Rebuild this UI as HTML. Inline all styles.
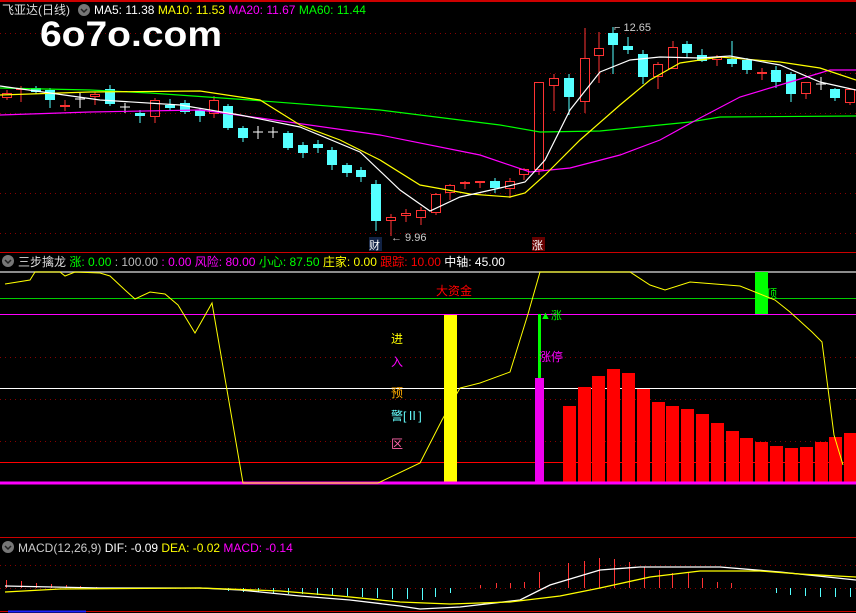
<!DOCTYPE html>
<html><head><meta charset="utf-8"><style>
html,body{margin:0;padding:0;background:#000;width:856px;height:613px;overflow:hidden}
svg{display:block}
text{font-family:"Liberation Sans","Noto Sans CJK SC",sans-serif}
</style></head><body>
<svg id="s" width="856" height="613" viewBox="0 0 856 613" xmlns="http://www.w3.org/2000/svg">
<rect width="856" height="613" fill="#000"/>
<line x1="0" y1="1" x2="856" y2="1" stroke="#c00" stroke-width="2"/>
<g stroke="#800" stroke-dasharray="1,4" stroke-width="1">
<line x1="0" y1="33.5" x2="856" y2="33.5"/><line x1="0" y1="73.5" x2="856" y2="73.5"/><line x1="0" y1="113.5" x2="856" y2="113.5"/><line x1="0" y1="153.5" x2="856" y2="153.5"/><line x1="0" y1="193.5" x2="856" y2="193.5"/><line x1="0" y1="233.5" x2="856" y2="233.5"/>
<line x1="0" y1="357.5" x2="856" y2="357.5"/><line x1="0" y1="399.5" x2="856" y2="399.5"/><line x1="0" y1="441.5" x2="856" y2="441.5"/>
<line x1="0" y1="565.5" x2="856" y2="565.5"/><line x1="0" y1="588.5" x2="856" y2="588.5"/>
</g>
<line x1="0" y1="252.5" x2="856" y2="252.5" stroke="#c00"/>
<line x1="0" y1="537.5" x2="856" y2="537.5" stroke="#c00"/>
<line x1="0" y1="611.5" x2="856" y2="611.5" stroke="#c00"/>
<line x1="8" y1="611.5" x2="86" y2="611.5" stroke="#22f" stroke-width="2"/>

<text x="2" y="14" font-size="12" fill="#ddd">飞亚达(日线)</text>
<circle cx="84" cy="10" r="6" fill="#777"/><path d="M81 9l3 3 3-3" stroke="#222" fill="none" stroke-width="1.5"/>
<text x="94" y="14" font-size="12"><tspan fill="#fff">MA5: 11.38 </tspan><tspan fill="#ff0">MA10: 11.53 </tspan><tspan fill="#f0f">MA20: 11.67 </tspan><tspan fill="#0f0">MA60: 11.44</tspan></text>
<text x="40" y="46" font-size="35" font-weight="bold" fill="#fff" textLength="182" lengthAdjust="spacingAndGlyphs">6o7o.com</text>

<g id="candles"></g>
<g fill="none" stroke-width="1.2">
<polyline stroke="#0f0" points="0,88 90,90 150,93 250,100 380,110 500,125 540,132 600,131 650,126 690,122 720,117 856,116"/>
<polyline stroke="#f0f" points="0,115 90,112 200,110 260,118 380,135 480,155 530,172 570,168 620,155 660,140 700,118 740,97 790,82 830,70 856,70"/>
<polyline stroke="#ff0" points="0,95 90,92 200,91 260,100 300,125 340,140 380,160 420,185 470,194 510,197 525,193 545,175 580,140 620,105 650,80 680,63 720,57 780,62 820,68 856,80"/>
<polyline stroke="#fff" points="0,86 50,93 100,100 180,105 240,115 300,127 360,152 400,190 430,211 460,197 500,188 525,182 545,160 570,110 600,72 630,60 660,57 700,58 730,56 780,65 820,82 856,90"/>
</g>
<text x="614" y="31" font-size="11" fill="#ccc">⌐ 12.65</text>
<text x="391" y="241" font-size="11" fill="#ccc">← 9.96</text>
<rect x="369" y="237" width="13" height="14" fill="#124"/><text x="369" y="249" font-size="11" fill="#fff">财</text>
<rect x="532" y="237" width="13" height="14" fill="#600"/><text x="532" y="249" font-size="11" fill="#fff">涨</text>

<circle cx="8" cy="261" r="6" fill="#777"/><path d="M5 260l3 3 3-3" stroke="#222" fill="none" stroke-width="1.5"/>
<text x="18" y="266" font-size="12"><tspan fill="#ddd">三步擒龙 </tspan><tspan fill="#0f0">涨: 0.00 </tspan><tspan fill="#bbb">: 100.00 </tspan><tspan fill="#f0f">: 0.00 风险: 80.00 </tspan><tspan fill="#0f0">小心: 87.50 </tspan><tspan fill="#ff0">庄家: 0.00 </tspan><tspan fill="#f00">跟踪: 10.00 </tspan><tspan fill="#fff">中轴: 45.00</tspan></text>
<line x1="0" y1="272" x2="856" y2="272" stroke="#bbb" stroke-width="1.5"/>
<line x1="0" y1="298.5" x2="856" y2="298.5" stroke="#0c0"/>
<line x1="0" y1="314.5" x2="856" y2="314.5" stroke="#f0f"/>
<line x1="0" y1="388.5" x2="856" y2="388.5" stroke="#fff"/>
<line x1="0" y1="462.5" x2="856" y2="462.5" stroke="#f00"/>
<text x="436" y="295" font-size="12" fill="#f00">大资金</text>
<rect x="444" y="315" width="13" height="168" fill="#ff0"/>
<rect x="538" y="314" width="3" height="64" fill="#0f0"/>
<rect x="535" y="378" width="9" height="105" fill="#e0e"/>
<text x="540" y="319" font-size="11" fill="#0f0">▲涨</text>
<text x="539" y="361" font-size="12" fill="#f0f">涨停</text>
<rect x="755" y="272" width="13" height="42" fill="#0f0"/>
<text x="766" y="297" font-size="11" fill="#0f0">顶</text>
<g font-size="12"><text x="391" y="343" fill="#ff0">进</text><text x="391" y="366" fill="#f0f">入</text><text x="391" y="397" fill="#fa0">预</text><text x="391" y="420" fill="#6ff">警[Ⅱ]</text><text x="391" y="448" fill="#f6a">区</text></g>
<g id="bars" fill="#f00"></g>
<line x1="0" y1="483" x2="856" y2="483" stroke="#f0f" stroke-width="3"/>
<polyline fill="none" stroke="#ff0" stroke-width="1" points="5,284 30,280 35,272 60,272 65,276 75,272 100,273 110,276 125,290 135,299 150,292 165,294 178,305 195,333 212,303 243,483 378,483 420,463 442,420 460,388 480,383 510,372 528,314 540,272 630,272 650,285 665,290 690,282 740,286 775,300 790,312 812,332 822,342 834,435 843,465"/>

<circle cx="8" cy="547" r="6" fill="#777"/><path d="M5 546l3 3 3-3" stroke="#222" fill="none" stroke-width="1.5"/>
<text x="18" y="552" font-size="12"><tspan fill="#ccc">MACD(12,26,9) </tspan><tspan fill="#fff">DIF: -0.09 </tspan><tspan fill="#ff0">DEA: -0.02 </tspan><tspan fill="#f0f">MACD: -0.14</tspan></text>
<g id="hist" stroke-width="1"></g>
<polyline fill="none" stroke="#fff" stroke-width="1.3" points="5,586 100,588 200,588 240,590 300,596 350,600 400,606 420,609 460,607 520,600 550,585 600,570 640,567 720,567 780,572 856,580"/>
<polyline fill="none" stroke="#ff0" stroke-width="1.3" points="5,592 60,589 200,588 280,591 340,596 400,602 450,604 510,602 560,596 600,588 650,577 700,571 760,571 800,574 856,577"/>
</svg>
<script>
const NS="http://www.w3.org/2000/svg";
function el(p,t,a){const e=document.createElementNS(NS,t);for(const k in a)e.setAttribute(k,a[k]);p.appendChild(e);return e;}
const C=document.getElementById('candles');
const cs=[[2,93,98,90,100,1],[16,88,90,86,102,1],[31,88,92,86,94,0],[45,90,100,88,108,0],[60,105,106,100,111,1],[75,99,100,93,108,2],[90,94,97,92,105,1],[105,89,104,85,106,0],[120,107,108,103,113,2],[135,113,116,110,123,0],[150,100,117,98,123,1],[165,105,108,99,110,0],[180,103,112,100,114,0],[195,110,116,108,122,0],[209,100,114,96,118,1],[223,106,128,104,130,0],[238,128,138,126,142,0],[253,132,133,126,139,2],[268,132,133,127,138,2],[283,133,148,131,150,0],[298,145,153,142,158,0],[313,144,148,140,153,0],[327,150,165,147,170,0],[342,165,173,163,177,0],[356,170,177,167,182,0],[371,184,221,180,231,0],[386,217,221,214,236,1],[401,213,216,209,222,1],[416,210,218,207,225,1],[431,194,213,193,215,1],[445,185,193,184,200,1],[460,182,184,181,189,1],[475,181,183,181,188,1],[490,181,188,178,193,0],[505,181,189,178,198,1],[519,169,175,168,180,1],[534,82,170,82,175,1],[549,78,86,74,111,1],[564,78,97,74,115,0],[580,58,102,28,113,1],[594,48,56,32,83,1],[608,33,45,27,74,0],[623,46,50,37,54,0],[638,54,77,50,84,0],[653,64,77,62,89,1],[668,47,69,41,69,1],[682,44,53,41,58,0],[697,55,61,49,62,0],[712,57,60,55,66,1],[727,59,64,41,67,0],[742,60,70,58,74,0],[757,72,74,68,80,1],[771,70,82,66,88,0],[786,74,94,72,102,0],[801,82,94,82,99,1],[816,84,85,77,90,2],[830,89,98,88,101,0],[845,89,103,88,105,1]];
cs.forEach(([x,t,b,wt,wb,u])=>{
 const col=u==1?'#f33':(u==2?'#fff':'#5ff');const cx=x+5;
 if(u==0){el(C,'line',{x1:cx,y1:wt,x2:cx,y2:wb,stroke:col});el(C,'rect',{x:x,y:t,width:10,height:Math.max(1,b-t),fill:col});}
 else if(u==2){el(C,'line',{x1:cx,y1:wt,x2:cx,y2:wb,stroke:col});el(C,'line',{x1:x,y1:t,x2:x+10,y2:t,stroke:col});}
 else{el(C,'line',{x1:cx,y1:wt,x2:cx,y2:t,stroke:col});el(C,'line',{x1:cx,y1:b,x2:cx,y2:wb,stroke:col});
  if(b-t<=2)el(C,'rect',{x:x,y:t,width:10,height:2,fill:col});else el(C,'rect',{x:x+.5,y:t+.5,width:9,height:b-t-1,fill:'none',stroke:col});}
});
const B=document.getElementById('bars');
const xs=[563,578,592,607,622,637,652,666,681,696,711,726,740,755,770,785,800,815,829,844];
const ts=[406,387,376,369,373,389,402,406,409,414,423,431,438,442,446,448,447,442,437,433];
xs.forEach((x,i)=>el(B,'rect',{x:x,y:ts[i],width:13,height:483-ts[i]}));
const H=document.getElementById('hist');
[[6,580],[21,581],[36,583],[51,584],[66,585],[80,586],[96,587],[110,587.5]].forEach(([x,y])=>el(H,'line',{x1:x+.5,y1:y,x2:x+.5,y2:588,stroke:'#f33'}));
[[228,591],[243,592],[258,592],[273,593],[288,594],[302,594],[317,595],[332,595],[347,596],[362,597],[377,598],[392,599],[407,599],[422,600],[435,597],[450,593],[776,593],[790,595],[805,596],[820,597],[835,597],[850,597]].forEach(([x,y])=>el(H,'line',{x1:x+.5,y1:588,x2:x+.5,y2:y,stroke:'#5ff'}));
[[480,585],[496,583],[510,583],[524,582],[539,572],[568,563],[584,561],[599,558],[614,559],[629,562],[644,567],[659,570],[672,573],[688,573],[702,578],[717,582],[731,583]].forEach(([x,y])=>el(H,'line',{x1:x+.5,y1:y,x2:x+.5,y2:588,stroke:'#f33'}));
</script>
</body></html>
